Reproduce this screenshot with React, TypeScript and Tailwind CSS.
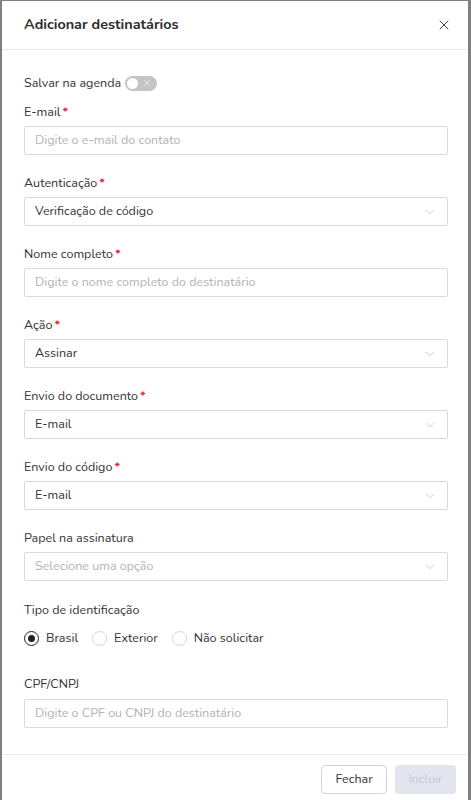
import { X, ChevronDown } from 'lucide-react';

type Field = { label: string; required?: boolean; kind: 'input' | 'select'; value?: string; placeholder?: string };

const FIELDS_TOP: Field[] = [
  { label: 'E-mail', required: true, kind: 'input', placeholder: 'Digite o e-mail do contato' },
  { label: 'Autenticação', required: true, kind: 'select', value: 'Verificação de código' },
  { label: 'Nome completo', required: true, kind: 'input', placeholder: 'Digite o nome completo do destinatário' },
  { label: 'Ação', required: true, kind: 'select', value: 'Assinar' },
  { label: 'Envio do documento', required: true, kind: 'select', value: 'E-mail' },
  { label: 'Envio do código', required: true, kind: 'select', value: 'E-mail' },
  { label: 'Papel na assinatura', kind: 'select', placeholder: 'Selecione uma opção' },
];

function Label({ text, required }: { text: string; required?: boolean }) {
  return (
    <div className="h-[18px] flex items-center text-[12.5px] text-[#333]">
      {text}
      {required && <span className="text-[#e8262b] ml-[2px] font-bold">*</span>}
    </div>
  );
}

function FieldBox({ f }: { f: Field }) {
  const placeholder = !f.value;
  return (
    <div className="flex flex-col gap-[5px]">
      <Label text={f.label} required={f.required} />
      <div className="h-[29px] border border-[#d9d9d9] rounded-[2px] flex items-center pl-[10px] pr-[10px]">
        <span className={`flex-1 text-[12.5px] ${placeholder ? 'text-[#b3b3b3]' : 'text-[#333]'}`}>
          {f.value ?? f.placeholder}
        </span>
        {f.kind === 'select' && <ChevronDown size={14} strokeWidth={1} className="text-[#aaa]" />}
      </div>
    </div>
  );
}

function Radio({ label, on }: { label: string; on?: boolean }) {
  return (
    <label className="flex items-center gap-[7px]">
      <span className={`w-[15px] h-[15px] rounded-full border flex items-center justify-center ${on ? 'border-[#222] border-[1.5px]' : 'border-[#d6d6d6]'}`}>
        {on && <span className="w-[7px] h-[7px] rounded-full bg-[#222]" />}
      </span>
      <span className="text-[12.5px] text-[#333]">{label}</span>
    </label>
  );
}

export default function App() {
  return (
    <div className="bg-[#7f7f7f] w-[471px] h-[800px] pl-[2px] pr-[3px] pt-[1px]" style={{ fontFamily: 'Nunito, Lato, "Noto Sans", sans-serif' }}>
      <div className="bg-white h-[799px] flex flex-col">
        <header className="h-[49px] border-b border-[#e8e8e8] flex items-center justify-between pl-[22px] pr-[16px] shrink-0">
          <h1 className="text-[14.4px] font-bold text-[#2b2b2b]">Adicionar destinatários</h1>
          <X size={16} strokeWidth={1.5} className="text-[#444]" />
        </header>

        <div className="flex-1 pl-[22px] pr-[20px] pt-[24px]">
          <div className="flex items-center gap-[4px] h-[18px] text-[12.5px] text-[#333]">
            Salvar na agenda
            <span className="w-[32px] h-[15px] rounded-full bg-[#c4c4c4] flex items-center px-[2px] gap-[4px]">
              <span className="w-[11px] h-[11px] rounded-full bg-white" />
              <X size={10} strokeWidth={1.5} className="text-white" />
            </span>
          </div>

          <div className="flex flex-col gap-[19px] mt-[11px]">
            {FIELDS_TOP.map(f => <FieldBox key={f.label} f={f} />)}

            <div className="flex flex-col gap-[10px] mt-[1px]">
              <Label text="Tipo de identificação" />
              <div className="flex items-center gap-[14px]">
                <Radio label="Brasil" on />
                <Radio label="Exterior" />
                <Radio label="Não solicitar" />
              </div>
            </div>

            <div className="mt-[9px]">
              <FieldBox f={{ label: 'CPF/CNPJ', kind: 'input', placeholder: 'Digite o CPF ou CNPJ do destinatário' }} />
            </div>
          </div>
        </div>

        <footer className="h-[46px] border-t border-[#ececec] flex items-start justify-end gap-[8px] pt-[10px] pr-[12px] shrink-0">
          <button className="h-[29px] w-[66px] border border-[#d4d4d4] rounded-[4px] text-[12.5px] text-[#333] bg-white">Fechar</button>
          <button disabled className="h-[29px] w-[61px] rounded-[4px] text-[12.5px] text-[#c3c7d0] bg-[#e3e6ef]">Incluir</button>
        </footer>
      </div>
    </div>
  );
}
